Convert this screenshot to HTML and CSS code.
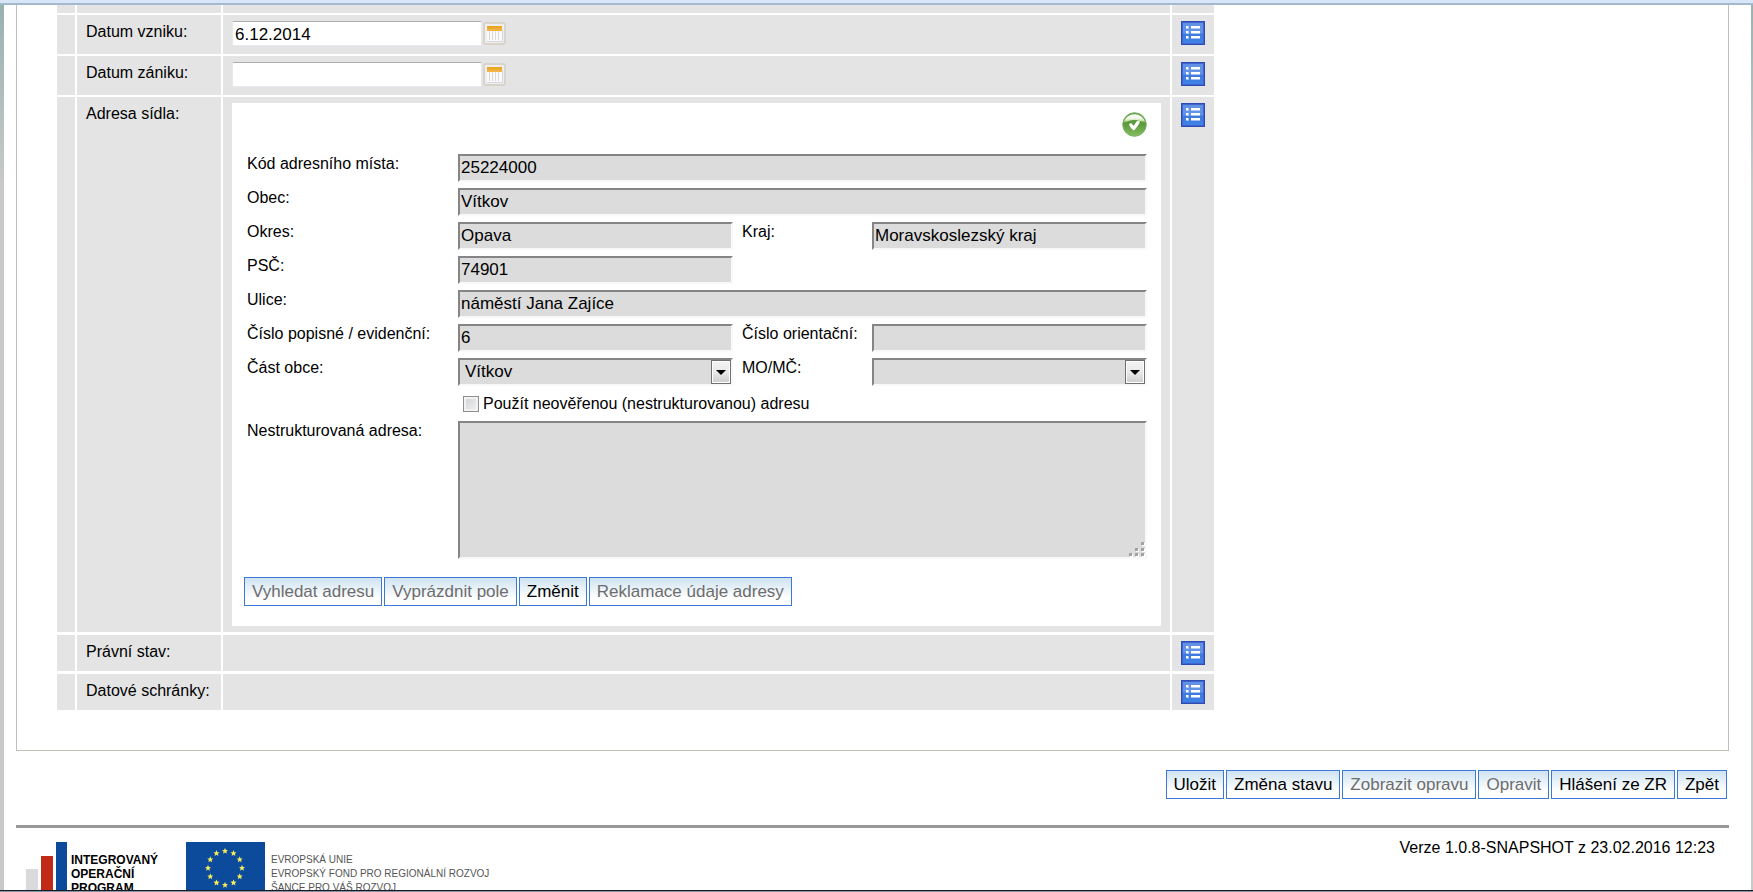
FILE: index.html
```html
<!DOCTYPE html>
<html lang="cs">
<head>
<meta charset="utf-8">
<title>Detail subjektu</title>
<link rel="stylesheet" href="styles.css">
</head>
<body>
<svg class="defs" aria-hidden="true">
  <defs>
    <linearGradient id="blue" x1="0" y1="0" x2="0" y2="1">
      <stop offset="0" stop-color="#6190e4"/><stop offset=".5" stop-color="#6494e6"/>
      <stop offset=".55" stop-color="#3f7ade"/><stop offset="1" stop-color="#3f82e6"/>
    </linearGradient>
    <linearGradient id="green" x1="0" y1="0" x2="0" y2="1">
      <stop offset="0" stop-color="#5da144"/><stop offset=".5" stop-color="#5f9a3e"/><stop offset="1" stop-color="#86bf62"/>
    </linearGradient>
    <linearGradient id="gloss" x1="0" y1="0" x2="0" y2="1">
      <stop offset="0" stop-color="#fff"/><stop offset=".5" stop-color="#f4f9ea"/><stop offset="1" stop-color="#b3d488"/>
    </linearGradient>
    <linearGradient id="orange" x1="0" y1="0" x2="0" y2="1">
      <stop offset="0" stop-color="#e8a21c"/><stop offset="1" stop-color="#f3b94c"/>
    </linearGradient>
    <linearGradient id="key" x1="0" y1="0" x2="0" y2="1">
      <stop offset="0" stop-color="#f3f3f3"/><stop offset=".5" stop-color="#e9e9e9"/><stop offset="1" stop-color="#cfcfcf"/>
    </linearGradient>
    <symbol id="list" viewBox="0 0 24 24">
      <rect width="24" height="24" fill="#2f49b5"/>
      <rect x="1" y="1" width="22" height="22" fill="#3f66cf"/>
      <rect x="2" y="2" width="20" height="20" fill="url(#blue)"/>
      <path d="M5 5h3v3H5zM10 5h9v3h-9zM5 10h3v3H5zM10 10h9v3h-9zM5 15h3v3H5zM10 15h9v3h-9z" fill="#fff" opacity=".5"/>
      <path d="M5 5h2v2H5zM10 5h9v2h-9zM5 10h2v2H5zM10 10h9v2h-9zM5 15h2v2H5zM10 15h9v2h-9z" fill="#fff"/>
    </symbol>
    <symbol id="calendar" viewBox="0 0 23 23">
      <rect x="1" y="1" width="21" height="21" rx="2" fill="#f0efee" stroke="#d8d4cc" stroke-width="2"/>
      <rect x="4" y="8" width="15" height="11" fill="#fafafa"/>
      <path d="M6.500 8v10M9.500 8v10M12.500 8v10M15.500 8v10" stroke="#dad7d4"/>
      <path d="M4 19.500h15.500V8" stroke="#d3d8e4" fill="none"/>
      <rect x="4" y="4" width="15" height="5" fill="url(#orange)"/>
    </symbol>
    <symbol id="drop" viewBox="0 0 20 24">
      <rect x=".5" y=".5" width="19" height="23" fill="#fff" stroke="#707070"/>
      <rect x="2" y="2" width="16" height="20" fill="url(#key)"/>
      <path d="M5 10h10l-5 5z"/>
    </symbol>
  </defs>
</svg>
<div class="window">
  <div class="topbar"></div>
  <main class="page">
    <section class="box">
      <div class="rows">
        <div class="row cut"><i></i><i></i><i></i><i></i></div>
        <div class="row">
          <i></i>
          <label class="name" for="vznik">Datum vzniku:</label>
          <div class="value date">
            <input class="datefield" id="vznik" type="text" value="6.12.2014">
            <button class="icon" type="button" aria-label="Kalendář"><svg class="cal"><use href="#calendar"/></svg></button>
          </div>
          <div class="tool"><button class="icon" type="button" aria-label="Historie"><svg class="lst"><use href="#list"/></svg></button></div>
        </div>
        <div class="row">
          <i></i>
          <label class="name" for="zanik">Datum zániku:</label>
          <div class="value date">
            <input class="datefield" id="zanik" type="text">
            <button class="icon" type="button" aria-label="Kalendář"><svg class="cal"><use href="#calendar"/></svg></button>
          </div>
          <div class="tool"><button class="icon" type="button" aria-label="Historie"><svg class="lst"><use href="#list"/></svg></button></div>
        </div>
        <div class="row">
          <i></i>
          <div class="name">Adresa sídla:</div>
          <div class="value">
            <div class="panel">
              <div class="status">
                <svg class="ok" viewBox="0 0 25 25" role="img" aria-label="Ověřeno">
                  <circle cx="12.500" cy="12.500" r="11.800" fill="url(#green)" stroke="#7db268"/>
                  <path d="M1.800 10a11 10 0 0 1 21.400 0c-2-.5-3 0-4.500-1-3.500-1.500-9-1.500-12.400 0-1.500 1-2.500 .5-4.500 1z" fill="url(#gloss)"/>
                  <path d="M7 12.500c1-1.500 2.500-1.500 3.200-.5l1.300 2 3.500-5 2.800-.5c-.5 1 .2 1.500-.3 2.500-1.500 3-3.500 5-5.500 7.500-2-1-3.800-3-5-6z" fill="#fff"/>
                </svg>
              </div>
              <div class="form">
                <label for="kod">Kód adresního místa:</label>
                <input class="field wide" id="kod" type="text" value="25224000" readonly>
                <label for="obec">Obec:</label>
                <input class="field wide" id="obec" type="text" value="Vítkov" readonly>
                <label for="okres">Okres:</label>
                <input class="field" id="okres" type="text" value="Opava" readonly>
                <label for="kraj">Kraj:</label>
                <input class="field" id="kraj" type="text" value="Moravskoslezský kraj" readonly>
                <label for="psc">PSČ:</label>
                <input class="field" id="psc" type="text" value="74901" readonly>
                <label class="first" for="ulice">Ulice:</label>
                <input class="field wide" id="ulice" type="text" value="náměstí Jana Zajíce" readonly>
                <label for="cp">Číslo popisné / evidenční:</label>
                <input class="field" id="cp" type="text" value="6" readonly>
                <label for="co">Číslo orientační:</label>
                <input class="field" id="co" type="text" readonly>
                <label for="cast">Část obce:</label>
                <div class="pick">
                  <select class="field" id="cast"><option>Vítkov</option></select>
                  <svg class="arrow"><use href="#drop"/></svg>
                </div>
                <label for="mo">MO/MČ:</label>
                <div class="pick">
                  <select class="field" id="mo"><option></option></select>
                  <svg class="arrow"><use href="#drop"/></svg>
                </div>
              </div>
              <div class="form last">
                <label class="tick"><input class="tickbox" type="checkbox"> Použít neověřenou (nestrukturovanou) adresu</label>
                <label for="nestr">Nestrukturovaná adresa:</label>
                <div class="area wide">
                  <textarea class="field text" id="nestr" readonly></textarea>
                  <svg class="grip" viewBox="0 0 16 16"><path fill="#fff" d="M13 2h3v3h-3zM7 8h3v3H7zM13 8h3v3h-3zM1 13h3v3H1zM7 13h3v3H7zM13 13h3v3h-3z"/><path fill="#a2a2a2" d="M12 1h3v3h-3zM6 7h3v3H6zM12 7h3v3h-3zM0 12h3v3H0zM6 12h3v3H6zM12 12h3v3h-3z"/></svg>
                </div>
              </div>
              <div class="buttons">
                <button class="btn" type="button" disabled>Vyhledat adresu</button>
                <button class="btn" type="button" disabled>Vyprázdnit pole</button>
                <button class="btn" type="button">Změnit</button>
                <button class="btn" type="button" disabled>Reklamace údaje adresy</button>
              </div>
            </div>
          </div>
          <div class="tool"><button class="icon" type="button" aria-label="Historie"><svg class="lst"><use href="#list"/></svg></button></div>
        </div>
      </div>
      <div class="rows loose">
        <div class="row">
          <i></i><div class="name">Právní stav:</div><i></i>
          <div class="tool"><button class="icon" type="button" aria-label="Historie"><svg class="lst"><use href="#list"/></svg></button></div>
        </div>
        <div class="row">
          <i></i><div class="name">Datové schránky:</div><i></i>
          <div class="tool"><button class="icon" type="button" aria-label="Historie"><svg class="lst"><use href="#list"/></svg></button></div>
        </div>
      </div>
    </section>
    <div class="buttons actions">
      <button class="btn" type="button">Uložit</button>
      <button class="btn" type="button">Změna stavu</button>
      <button class="btn" type="button" disabled>Zobrazit opravu</button>
      <button class="btn" type="button" disabled>Opravit</button>
      <button class="btn" type="button">Hlášení ze ZR</button>
      <button class="btn" type="button">Zpět</button>
    </div>
    <footer class="foot">
      <div class="logos">
        <svg class="bars" viewBox="0 0 42 60"><path fill="#d9dadc" d="M0 27h12v33H0z"/><path fill="#c22a18" d="M15 14h12v46H15z"/><path fill="#0c4a9c" d="M30 0h11v60H30z"/></svg>
        <p class="iop">INTEGROVANÝ<br>OPERAČNÍ<br>PROGRAM</p>
        <svg class="flag" viewBox="0 0 79 60">
          <defs><path id="star" d="M0-3.200L.9-1.100 3-1 1.400.5 1.900 2.700 0 1.500-1.900 2.700-1.400.5-3-1-.9-1.100z" fill="#f3ec5a"/></defs>
          <path fill="#0c4a9c" d="M0 0h79v60H0z"/>
          <use href="#star" x="39" y="9"/><use href="#star" x="47.500" y="11.300"/><use href="#star" x="53.700" y="17.500"/>
          <use href="#star" x="56" y="26"/><use href="#star" x="53.700" y="34.500"/><use href="#star" x="47.500" y="40.700"/>
          <use href="#star" x="39" y="43"/><use href="#star" x="30.500" y="40.700"/><use href="#star" x="24.300" y="34.500"/>
          <use href="#star" x="22" y="26"/><use href="#star" x="24.300" y="17.500"/><use href="#star" x="30.500" y="11.300"/>
        </svg>
        <p class="eu">EVROPSKÁ UNIE<br>EVROPSKÝ FOND PRO REGIONÁLNÍ ROZVOJ<br>ŠANCE PRO VÁŠ ROZVOJ</p>
      </div>
      <p class="version">Verze 1.0.8-SNAPSHOT z 23.02.2016 12:23</p>
    </footer>
  </main>
  <div class="taskbar"></div>
</div>
</body>
</html>
```
FILE: styles.css
```css
* { box-sizing: border-box; }
body {
  margin: 0;
  font: 16px/20px "Liberation Sans", Arial, sans-serif;
  color: #000;
  background: #fff;
}
p { margin: 0; }
svg { display: block; }
button, input, select, textarea { font: inherit; color: inherit; margin: 0; }
.defs { position: absolute; width: 0; height: 0; }

.window { height: 100vh; display: flex; flex-direction: column; overflow: hidden; }
.topbar { flex: none; height: 5px; background: #d7e7f7; border-bottom: 2px solid #a5b9ce; }
.taskbar { flex: none; height: 2px; background: #8494a6; border-top: 1px solid #141a24; }
.page {
  flex: 1;
  min-height: 0;
  overflow: hidden;
  padding: 0 22px 0 12px;
  border: solid;
  border-width: 0 2px 0 4px;
  border-image: linear-gradient(#98b2b1, #c8c9c9 180px) 1;
}

.box { border: 1px solid #c2bfb8; border-top: 0; padding: 0 40px 40px; }
.rows { max-width: 1157px; display: grid; gap: 2px; }
.rows.loose { gap: 3px; margin-top: 3px; }
.row { display: grid; grid-template-columns: 18px 144px 1fr 42px; gap: 2px; }
.row > * { background: #e4e4e4; }
.cut { height: 8px; }
.name { padding: 7px 9px; }
.value { padding: 6px 9px; }
.tool { padding: 6px 9px; }
.icon { display: block; padding: 0; border: 0; background: none; }
.lst { width: 24px; height: 24px; }
.cal { width: 23px; height: 23px; }

.date { display: flex; align-items: center; gap: 1px; padding: 6px 9px 8px; }
.datefield {
  width: 250px;
  height: 25px;
  padding: 2px 2px 0;
  font-size: 17px;
  background: #fff;
  border: 1px solid #e3e9ef;
  border-top-color: #abadb3;
  border-radius: 2px;
}

.panel { background: #fff; padding: 9px 14px 20px; }
.status { display: flex; justify-content: flex-end; padding-bottom: 17px; }
.ok { width: 25px; height: 25px; }
.form {
  display: grid;
  grid-template-columns: 204px minmax(0, 1fr) 123px minmax(0, 1fr);
  column-gap: 8px;
  row-gap: 6px;
}
.first { grid-column: 1; }
.form > label { padding-left: 1px; }
.wide { grid-column: 2 / -1; }
.field {
  width: 100%;
  height: 28px;
  padding: 1px;
  font-size: 17px;
  background: #dcdcdc;
  border: 2px solid;
  border-color: #858585 #f9f9f9 #f9f9f9 #858585;
  border-radius: 0;
  appearance: none;
}
select.field { padding-left: 5px; }
.pick, .area { position: relative; }
.arrow { position: absolute; top: 2px; right: 2px; width: 20px; height: 24px; pointer-events: none; }
.text { display: block; height: 138px; resize: none; }
.grip { position: absolute; right: 2px; bottom: 2px; width: 16px; height: 16px; pointer-events: none; }
.form.last { padding-top: 8px; row-gap: 7px; }
.form > .tick { grid-column: 2 / -1; display: flex; align-items: center; gap: 4px; padding-left: 5px; }
.tickbox {
  appearance: none;
  width: 16px;
  height: 16px;
  border: 1px solid #8e8f8f;
  background: linear-gradient(135deg, #ccd0d5, #f4f4f4);
  box-shadow: inset 0 0 0 2px #f2f2f2;
}

.buttons { display: flex; gap: 2px; padding-top: 18px; margin-left: -2px; }
.btn {
  height: 29px;
  padding: 0 7px;
  font-size: 17px;
  border: 1px solid #3c78d8;
  background: linear-gradient(#cfe3f1, #fff 75%);
  white-space: nowrap;
}
.btn:disabled { color: #6d6d6d; }
.actions { justify-content: flex-end; padding: 19px 2px 26px 0; }

.foot { display: flex; justify-content: space-between; border-top: 3px solid #999; padding: 14px 14px 0 10px; }
.logos { display: flex; align-items: flex-start; }
.bars { width: 42px; height: 60px; }
.iop { width: 118px; padding: 11px 0 0 3px; font-size: 12px; line-height: 14px; font-weight: bold; }
.flag { width: 79px; height: 60px; }
.eu { padding: 11px 0 0 6px; font-size: 10px; line-height: 14px; color: #555; white-space: nowrap; }
.version { line-height: 12px; }
```
